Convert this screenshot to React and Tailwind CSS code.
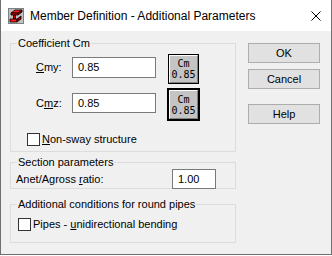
import React from 'react';

function BeamIcon() {
  return (
    <svg width="16" height="16" viewBox="0 0 16 16">
      <rect x="0" y="0" width="16" height="16" fill="#c0c0c0" />
      <rect x="0.5" y="0.5" width="15" height="15" fill="none" stroke="#808080" />
      {/* top flange */}
      <path d="M3 5 L7 2 L14 2 L10 5 Z" fill="#ff2020" stroke="#000" strokeWidth="0.8" />
      <path d="M3 5 L10 5 L10 7 L3 7 Z" fill="#e00000" stroke="#000" strokeWidth="0.8" />
      <path d="M10 5 L14 2 L14 4 L10 7 Z" fill="#a00000" stroke="#000" strokeWidth="0.8" />
      {/* web */}
      <path d="M5.5 7 L7.5 7 L7.5 11 L5.5 11 Z" fill="#e00000" stroke="#000" strokeWidth="0.8" />
      {/* bottom flange */}
      <path d="M2 11 L9 11 L9 14 L2 14 Z" fill="#ff1a1a" stroke="#000" strokeWidth="0.8" />
      <path d="M9 11 L13 8 L13 11 L9 14 Z" fill="#a00000" stroke="#000" strokeWidth="0.8" />
    </svg>
  );
}

function Group({ title, className, children }) {
  return (
    <div className={`border border-[#dcdcdc] ${className}`}>
      <div className="-mt-[8px] ml-[6px] px-[1px] w-fit bg-[#f0f0f0] leading-[15px] text-[11px]">
        {title}
      </div>
      {children}
    </div>
  );
}

function Input({ value, className }) {
  return (
    <div className={`bg-white border border-[#7a7a7a] pl-[5px] flex items-center text-[11px] ${className}`}>
      {value}
    </div>
  );
}

function CmButton({ thick }) {
  return (
    <div
      className={`bg-black ${thick ? 'p-[2px] w-[33px] h-[33px]' : 'p-[1px] w-[31px] h-[30px]'}`}
    >
      <div
        className="w-full h-full bg-[#c4c4c4] border border-t-white border-l-white border-r-[#808080] border-b-[#808080] flex flex-col items-center justify-center text-[10px] leading-[11px]"
        style={{ fontFamily: '"DejaVu Sans Mono", "Liberation Mono", monospace' }}
      >
        <span>Cm</span>
        <span>0.85</span>
      </div>
    </div>
  );
}

function Checkbox() {
  return <div className="w-[13px] h-[13px] bg-white border border-[#333]" />;
}

function Button({ children, className }) {
  return (
    <div
      className={`w-[72px] h-[20px] bg-[#e1e1e1] border border-[#adadad] flex items-center justify-center text-[11px] ${className}`}
    >
      {children}
    </div>
  );
}

export default function App() {
  return (
    <div
      className="w-[332px] h-[255px] bg-[#f0f0f0] border-l border-r border-b border-[#707070] flex flex-col text-black"
      style={{ fontFamily: '"Liberation Sans", Arial, sans-serif' }}
    >
      {/* title bar */}
      <div className="h-[31px] bg-white flex items-center shrink-0">
        <div className="ml-[7px] mt-[1px]">
          <BeamIcon />
        </div>
        <div className="ml-[6px] text-[12px]">Member Definition - Additional Parameters</div>
        <svg className="ml-auto mr-[10px]" width="10" height="10" viewBox="0 0 10 10">
          <path d="M0.5 0.5 L9.5 9.5 M9.5 0.5 L0.5 9.5" stroke="#000" strokeWidth="1" />
        </svg>
      </div>

      {/* client */}
      <div className="flex text-[11px]">
        <div className="ml-[9px] w-[226px] flex flex-col">
          <Group title="Coefficient Cm" className="mt-[12px] h-[109px]">
            <div className="flex mt-[3px]">
              <div className="w-[156px] flex items-center mt-[3px] h-[21px]">
                <span className="ml-[25px] w-[36px]">
                  <u>C</u>my:
                </span>
                <Input value="0.85" className="w-[84px] h-[21px]" />
              </div>
              <div className="ml-[1px]">
                <CmButton />
              </div>
            </div>
            <div className="flex mt-[4px]">
              <div className="w-[156px] flex items-center mt-[5px] h-[20px]">
                <span className="ml-[25px] w-[36px]">
                  C<u>m</u>z:
                </span>
                <Input value="0.85" className="w-[84px] h-[20px]" />
              </div>
              <div>
                <CmButton thick />
              </div>
            </div>
            <div className="flex items-center mt-[10px] ml-[16px]">
              <Checkbox />
              <span className="ml-[2px]">
                <u>N</u>on-sway structure
              </span>
            </div>
          </Group>

          <Group title="Section parameters" className="mt-[10px] h-[27px]">
            <div className="flex items-center -mt-[1px]">
              <span className="ml-[5px] w-[156px]">
                Anet/Agross <u>r</u>atio:
              </span>
              <Input value="1.00" className="w-[44px] h-[20px]" />
            </div>
          </Group>

          <Group title="Additional conditions for round pipes" className="mt-[15px] h-[39px]">
            <div className="flex items-center mt-[4px] ml-[7px]">
              <Checkbox />
              <span className="ml-[2px]">
                Pipes - <u>u</u>nidirectional bending
              </span>
            </div>
          </Group>
        </div>

        <div className="ml-[12px] flex flex-col">
          <Button className="mt-[12px]">OK</Button>
          <Button className="mt-[6px]">Cancel</Button>
          <Button className="mt-[15px]">Help</Button>
        </div>
      </div>
    </div>
  );
}
